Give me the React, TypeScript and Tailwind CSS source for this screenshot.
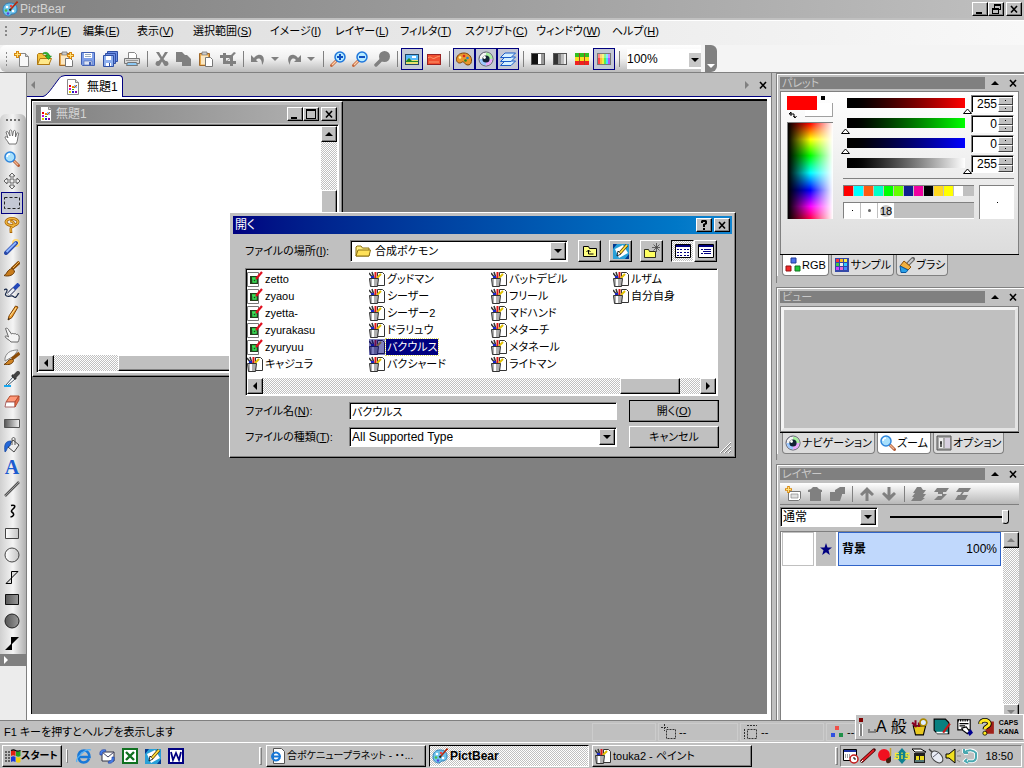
import React, { useState } from 'react';
import clsx from 'clsx';

const RAISED = 'bg-[#c0c0c0] border border-t-white border-l-white border-b-black border-r-black shadow-[inset_-1px_-1px_0_#808080]';
const SUNKEN = 'bg-white border border-t-[#808080] border-l-[#808080] border-b-white border-r-white shadow-[inset_1px_1px_0_#000]';
const DITHER = 'bg-[repeating-conic-gradient(#fff_0_25%,#c0c0c0_0_50%)] bg-[length:2px_2px]';

// 16x16 drawings, shared by the toolbars, tabs and file list
const ART: Record<string, React.ReactNode> = {
  bear: (
    <>
      <path d="M8 2C3 2 1 5 1 9c0 3 2 6 6 6 2 0 1-2 3-2 3 0 5-1 5-5 0-4-3-6-7-6z" fill="#6ec3ec" stroke="#2d7fb8" />
      <circle cx="5" cy="6" r="1.3" fill="#fff" /><circle cx="9" cy="5" r="1.3" fill="#e44" />
      <circle cx="4" cy="9.5" r="1.3" fill="#47c247" /><circle cx="6" cy="12.5" r="1.2" fill="#54d" />
      <circle cx="11" cy="10" r="1.3" fill="#fff" />
      <path d="M15.5.5 9 8" stroke="#b22c10" strokeWidth="1.6" /><path d="M9 8 7.500 9.500" stroke="#321" strokeWidth="2" />
    </>
  ),
  page: (
    <>
      <path d="M2.500.500h8l3 3v12h-11z" fill="#fff" stroke="#888" /><path d="M10.500.500v3h3" fill="#ddd" stroke="#888" />
      <path d="M4 6h2v2H4z" fill="#e00" /><path d="M7 7h2v2H7z" fill="#e80" /><path d="M9 6h3v3H9z" fill="#48f" opacity=".6" /><path d="m9 9 3-3" stroke="#c60" />
      <path d="M4 9h2v2H4z" fill="#c0c" /><path d="M4 12h2v2H4z" fill="#dc0" /><path d="M7 12h2v2H7z" fill="#22c" /><path d="M10 12h2v2h-2z" fill="#80a" /><path d="M7 10h2v1H7z" fill="#2a2" />
    </>
  ),
  newFile: (
    <>
      <path d="M5.500 2.500h6l3 3v10h-9z" fill="#f8f8f8" stroke="#888" /><path d="M11.500 2.500v3h3" fill="#ccc" stroke="#888" />
      <path d="M3.500 0v7M0 3.500h7" stroke="#d88910" strokeWidth="3" /><path d="M3.500 1v5M1 3.500h5" stroke="#ffe27a" strokeWidth="1" />
    </>
  ),
  openFile: (
    <>
      <path d="M1.500 13.500v-10l1-1h4l1 2h6v9z" fill="#f3c23a" stroke="#b07810" />
      <path d="M1.500 13.500 4 7.500h11.500l-2.500 6z" fill="#ffe98a" stroke="#b07810" />
      <path d="M7 2c3-1.500 6-.500 6.500 3h2l-3 3.500-3.500-3.500h2C11 3 9 2.500 7 3z" fill="#30b830" stroke="#107810" strokeWidth=".5" />
    </>
  ),
  paste: (
    <>
      <path d="M1.500 2.500h10v12h-10z" fill="#e8a84a" stroke="#a0682a" /><path d="M4 1h5v3H4z" fill="#ccc" stroke="#777" strokeWidth=".8" />
      <path d="M3 4.500h7v9H3z" fill="#fbe8c4" /><path d="M7.500 6.500h5l2 2v7h-7z" fill="#fff" stroke="#777" />
    </>
  ),
  pasteNew: (
    <>
      <path d="M1.500 2.500h10v12h-10z" fill="#e8a84a" stroke="#a0682a" /><path d="M4 1h5v3H4z" fill="#ccc" stroke="#777" strokeWidth=".8" />
      <path d="M3 4.500h7v9H3z" fill="#fbe8c4" /><path d="M7.500 7.500h5l2 2v6h-7z" fill="#fff" stroke="#777" />
      <path d="M12.500 1v7M9 4.500h7" stroke="#d88910" strokeWidth="3" /><path d="M12.500 2v5M10 4.500h5" stroke="#ffe27a" />
    </>
  ),
  save: (
    <>
      <path d="M1.500 1.500h13v13h-12l-1-1z" fill="#7f9fe8" stroke="#3f5fb4" /><path d="M4 2h8v5H4z" fill="#fff" /><path d="M5 3.500h6M5 5.500h6" stroke="#9ab" />
      <path d="M4 10h8v4H4z" fill="#dde4f4" stroke="#5674b8" strokeWidth=".7" /><path d="M9 11h2v3H9z" fill="#3f5fb4" />
    </>
  ),
  saveAll: (
    <>
      <path d="M5.500.500h10v10h-10z" fill="#6f90e6" stroke="#2f4fa4" /><path d="M3.500 2.500h10v10h-10z" fill="#6f90e6" stroke="#2f4fa4" />
      <path d="M1.500 4.500h10v11h-10z" fill="#8fb0ee" stroke="#2f4fa4" /><path d="M4 5h5v4H4z" fill="#fff" /><path d="M4 12h5v3H4z" fill="#fff" /><path d="M7 12h1v3H7z" fill="#2f4fa4" />
    </>
  ),
  print: (
    <>
      <path d="M4.500 7V1.500h6l2 2V7" fill="#fff" stroke="#888" /><path d="M.500 7.500h15v5H.500z" fill="#d8d8d8" stroke="#777" />
      <path d="M2 9.500h12" stroke="#999" /><path d="M3.500 11.500h9l1 3h-11z" fill="#8cc8f4" stroke="#777" />
    </>
  ),
  cut: <path d="M2 1h3l3 5 3-5h3l-4.500 7 2 2a2.500 2.500 0 1 1-2 3L8 10.500 6.500 13a2.500 2.500 0 1 1-2-3l2-2z" fill="#808080" />,
  copy: <path d="M0 1h6l3 3h2l4 4v7H6v-4H0z" fill="#808080" />,
  crop: <path d="M3 2h3v2h5l3-3 2 1-3 3v5h3v3h-3v2h-3v-2H3V7H0V4h3zm3 5v3l4-3zm1 3h3V8z" fill="#808080" fillRule="evenodd" />,
  undo: <path d="M1 4v7h7L6 9c3-3 6-1 6 5 4-6 1-11-4-10-2 .5-3 1.500-4 3z" fill="#808080" />,
  redo: <path d="M15 4v7H8l2-2c-3-3-6-1-6 5-4-6-1-11 4-10 2 .5 3 1.500 4 3z" fill="#808080" />,
  magnify: (
    <>
      <path d="m10 10 4.500 4.500" stroke="#b4603c" strokeWidth="3" strokeLinecap="round" /><path d="m10 10 4 4" stroke="#f4b48c" strokeWidth="1.200" />
      <circle cx="6" cy="6" r="5" fill="#a8e0fc" stroke="#2f86dc" strokeWidth="1.500" /><path d="M3 6c0-2 1-3 3-3" stroke="#fff" strokeWidth="1.500" fill="none" />
    </>
  ),
  zoomIn: (
    <>
      <path d="m6 10-4.500 4.500" stroke="#c46a40" strokeWidth="3" strokeLinecap="round" /><path d="m6 10-4 4" stroke="#ffd0a8" strokeWidth="1.200" />
      <circle cx="10" cy="6" r="5" fill="#b8ecff" stroke="#1f76dc" strokeWidth="1.500" /><path d="M10 3v6M7 6h6" stroke="#1050c0" strokeWidth="2" />
    </>
  ),
  zoomOut: (
    <>
      <path d="m6 10-4.500 4.500" stroke="#c46a40" strokeWidth="3" strokeLinecap="round" /><path d="m6 10-4 4" stroke="#ffd0a8" strokeWidth="1.200" />
      <circle cx="10" cy="6" r="5" fill="#b8ecff" stroke="#1f76dc" strokeWidth="1.500" /><path d="M7 6h6" stroke="#1050c0" strokeWidth="2" />
    </>
  ),
  zoomGray: <><path d="m7 9-5 5" stroke="#808080" strokeWidth="3.500" strokeLinecap="round" /><circle cx="10.500" cy="5.500" r="5.500" fill="#808080" /></>,
  photo: (
    <>
      <path d="M1 3h14v11H1z" fill="#246" /><path d="M2 4h12v5H2z" fill="#58b8f8" /><path d="M2 9h12v4H2z" fill="#e8e070" />
      <path d="M2 10l3-3 3 3h6v1H2z" fill="#208828" /><path d="M8 5h4v2H8z" fill="#fff" />
    </>
  ),
  photoRed: (
    <>
      <path d="M1 3h14v11H1z" fill="#922" /><path d="M2 4h12v9H2z" fill="#f05030" /><path d="M2 7c3-3 4 2 7 0s4-1 5-2M3 11h10" stroke="#fa9a70" fill="none" />
    </>
  ),
  palette: (
    <>
      <path d="M8 2C3 2 .500 5 .500 8.500S4 13 6 11c2-1 3 3 6 3s3.500-3 3.500-5C15.500 5 12 2 8 2z" fill="#e8962c" stroke="#7c4408" />
      <circle cx="4" cy="6.500" r="1.300" fill="#fff2a0" /><circle cx="8" cy="5" r="1.300" fill="#d22" /><circle cx="11.500" cy="7" r="1.300" fill="#28c" /><circle cx="9.500" cy="9.500" r="1.300" fill="#282" />
    </>
  ),
  eye: (
    <>
      <circle cx="8" cy="8" r="7" fill="#f4f4f4" stroke="#556" /><path d="M8 1.500A6.500 6.500 0 0 1 14.500 8H8z" fill="#a8f0a0" /><path d="M14.500 8A6.500 6.500 0 0 1 8 14.500V8z" fill="#e8a8f8" />
      <path d="M8 14.500A6.500 6.500 0 0 1 1.500 8H8z" fill="#9cc8ff" /><circle cx="8" cy="8" r="3.600" fill="#123" /><circle cx="6.500" cy="6.500" r="1.400" fill="#fff" />
    </>
  ),
  layers: (
    <>
      {[10, 6, 2].map((y) => <path key={y} d={`M5 ${y}h10.500l-4.500 4.500H.500z`} fill="#d4f0ff" stroke="#1a5cc8" />)}
    </>
  ),
  halfTone: <><path d="M1 2h14v12H1z" fill="#555" /><path d="M2 3h6v10H2z" fill="#111" /><path d="M8 3h3v10H8z" fill="#fff" /><path d="M11 3h3v10h-3z" fill="#999" /></>,
  grayTone: <><path d="M1 2h14v12H1z" fill="#555" /><path d="M2 3h4v10H2z" fill="#333" /><path d="M6 3h3v10H6z" fill="#888" /><path d="M9 3h3v10H9z" fill="#bbb" /><path d="M12 3h2v10h-2z" fill="#eee" /></>,
  grid16: (
    <>
      <path d="M1 2h14v12H1z" fill="#a42" />
      {[1, 6, 11].map((x) => <g key={x}><path d={`M${x} 2h4v4h-4z`} fill="#30c020" /><path d={`M${x} 6h4v4h-4z`} fill="#f8e020" /><path d={`M${x} 10h4v4h-4z`} fill="#f02020" /></g>)}
    </>
  ),
  rainbow: (
    <>
      <path d="M1 2h14v12H1z" fill="#777" />
      {['#f44', '#fb3', '#ee4', '#5e5', '#4df', '#a5f'].map((c, i) => <path key={c} d={`M${2 + i * 2} 3h2v10h-2z`} fill={c} />)}
      <path d="M2 3h12v4H2z" fill="#fff" opacity=".35" />
    </>
  ),
  hand: <path d="M5 15c-1-3-4-5-4-7 1-1 2 0 3 1L2 3c1-1 2-.500 2.500 1L6 7 5.500 1.500C6.500.500 7.500 1 7.700 2L8.500 7l1-5c1-1 2-.500 2 .500L11.500 8l1.500-4c1-.700 2 0 1.500 1-1 3-.500 7-2.500 10z" fill="#fff" stroke="#666" strokeWidth=".9" />,
  move: <path d="M8 0l3 3H9v4h4V5l3 3-3 3V9H9v4h2l-3 3-3-3h2V9H3v2L0 8l3-3v2h4V3H5z" fill="#eee" stroke="#555" strokeWidth=".9" />,
  marquee: <path d="M.500 2.500h15v11h-15z" fill="none" stroke="#222" strokeDasharray="3 2" />,
  lasso: <><ellipse cx="8" cy="5" rx="6" ry="3.500" fill="none" stroke="#a86408" strokeWidth="3" /><path d="M6 4c4 0 6 5 2 6-2 .500-1 3-1 6" fill="none" stroke="#a86408" strokeWidth="2.600" /><ellipse cx="8" cy="5" rx="6" ry="3.500" fill="none" stroke="#f0b840" strokeWidth="1.500" /><path d="M6 4c4 0 6 5 2 6-2 .500-1 3-1 5" fill="none" stroke="#f0b840" strokeWidth="1.200" /></>,
  wand: <><circle cx="12" cy="4" r="4" fill="#ffd870" /><circle cx="12" cy="4" r="2.500" fill="#fff4c0" /><path d="M2 14 12 4" stroke="#2848a8" strokeWidth="4" strokeLinecap="round" /><path d="M2.500 13 12 3.500" stroke="#8cb4ff" strokeWidth="2" /></>,
  brush: <><path d="M15.500 1 8 8" stroke="#8c4c08" strokeWidth="3.500" /><path d="M0 14.500c3-1 3-6 8-7l2.500 2.500c0 4-6 6-10.500 4.500z" fill="#c87c1c" stroke="#6c3c08" /><path d="m15 1-6 6" stroke="#f4b850" /></>,
  pen: <><path d="M15 1 6 10" stroke="#2448b8" strokeWidth="4" /><path d="m10 6-5.500 5.500" stroke="#445" strokeWidth="4" /><path d="m10 6-5.500 5.500" stroke="#e8eef8" strokeWidth="2.500" /><path d="M0 7c3-2 4 0 2 3s2 4 5 3 3 3 5 1 2-4 3-3" fill="none" stroke="#124" strokeWidth="1.200" /></>,
  pencil: <><path d="M11.500 1 5 11l-1 4 4-2.500L14 2z" fill="#f0a030" stroke="#7c4408" /><path d="m4 15 .5-2 1.500 1z" fill="#222" /><path d="m12 3-6 8" stroke="#ffe0a0" /></>,
  finger: <path d="M1.500 1.500c1.500-1 3 .5 3.500 2L7.500 7c1-1 2-.500 2.500 0 1-.700 2-.300 2.500.500 1-.500 2 .200 2.500 1.500.500 2 0 4-1 6H7c-1-2-5-3-6-5.500 1-1 2-.500 3.500.500z" fill="#f4f4f4" stroke="#666" />,
  smudge: <><path d="M1 9C3 2 9 1 14 1l-4 6-9 5z" fill="#f4f4f4" stroke="#888" /><path d="M15.500 4 8 10" stroke="#8c4c08" strokeWidth="3.500" /><path d="M0 15.500c3-1 4-5.500 8-5.500l1.500 1.500c0 3-5 5-9.500 4z" fill="#d08424" stroke="#6c3c08" /></>,
  dropper: <><path d="m2 14 7-8 2 2-8 7z" fill="#fff" stroke="#456" /><path d="m8 4 4 4" stroke="#333" strokeWidth="2.500" /><path d="m11 5 3-3" stroke="#444" strokeWidth="4" strokeLinecap="round" /><path d="M0 15h7" stroke="#18a8f0" strokeWidth="2" /></>,
  eraser: <><path d="M6 3h9l-4 6H2z" fill="#ff9878" stroke="#b04828" /><path d="M2 9h9v5H1z" fill="#fff" stroke="#a66" /><path d="m11 9 4-6v4l-4 7z" fill="#e86c4c" stroke="#b04828" strokeWidth=".8" /></>,
  gradient: <><path d="M.500 4.500h15v8H.500z" fill="url(#gr)" stroke="#555" /></>,
  bucket: <><path d="m9 3 6 5-5 7-6-5z" fill="#eee" stroke="#444" /><path d="M8 8V2c0-2 3-2 3 0v6" fill="none" stroke="#555" /><path d="M7 4C1 4 0 8 1 15c2-1 2-6 5-6z" fill="#2468d8" stroke="#0a3c98" strokeWidth=".7" /></>,
  line: <><path d="m1 15 14-14" stroke="#555" strokeWidth="2.500" /><path d="m1 15 14-14" stroke="#999" /></>,
  curve: <path d="M7 2.500c4-1 5 1 2 3.500s-1 3 0 4 1 3.500-2.500 4" fill="none" stroke="#000" strokeWidth="1.600" />,
  rect: <path d="M1.500 3.500h13v10h-13z" fill="url(#lt)" stroke="#444" />,
  circle: <circle cx="8" cy="8" r="7" fill="url(#lt)" stroke="#444" />,
  poly: <path d="M7.500 2.500h6.500L2 14.500h5.500z" fill="#ddd" stroke="#000" />,
  rectFill: <path d="M1.500 3.500h13v10h-13z" fill="url(#dk)" stroke="#111" />,
  circleFill: <circle cx="8" cy="8" r="7" fill="url(#dk)" stroke="#222" />,
  polyFill: <path d="M7 2h8L8 9v6H1l6-6z" fill="#000" />,
  folder: <><path d="M1 13V4l1-1h4l1.500 2H14v8z" fill="#ffef84" stroke="#8c7010" /><path d="M1 13 3 7h12.500L14 13z" fill="#ffe158" stroke="#8c7010" /></>,
  folderUp: <><path d="M1.500 13.500v-10h5l1 2h7v8z" fill="#ffff80" stroke="#000" /><path d="M6.500 7v4h5M4.500 9l2-2 2 2" stroke="#000" fill="none" /></>,
  desktop: <><path d="M0 1h16v15H0z" fill="#28a0d8" /><path d="M0 1h4L0 6zM12 16h4v-5z" fill="#003890" /><path d="M2 6l8-4 5 8-9 5z" fill="#fff" /><path d="m4 13 1-5 3 3z" fill="#fff" stroke="#000" strokeWidth=".8" /><path d="m7 10 7-8" stroke="#604000" strokeWidth="3.400" /><path d="m7 10 7-8" stroke="#ffe040" strokeWidth="1.800" /></>,
  folderNew: <><path d="M.500 14.500v-8h4l1 2h6v6z" fill="#ffff60" stroke="#000" strokeWidth=".8" /><path d="M12.500 0v9M8 4.500h8M9.500 1.500l6 6M15.500 1.500l-6 6" stroke="#444" strokeWidth=".8" /></>,
  listView: <><path d="M.500 1.500h15v13H.500z" fill="#fff" stroke="#000" /><path d="M1 2h14v2H1z" fill="#000080" /><path d="M2 6.500h2m1 0h2m2 0h2m1 0h2M2 9.500h2m1 0h2m2 0h2m1 0h2M2 12.500h2m1 0h2m2 0h2m1 0h2" stroke="#000080" /></>,
  detailView: <><path d="M.500 1.500h15v13H.500z" fill="#fff" stroke="#000" /><path d="M1 2h14v2H1z" fill="#000080" /><path d="M3 6.500h2m1 0h7M5 8.500h8M3 10.500h2m1 0h7" stroke="#000080" /></>,
  gif: <><path d="M.500 1.500h11v14H.500z" fill="#fff" stroke="#777" /><path d="M3 5h8v8H3z" fill="#24401c" /><path d="M5 7h4v1H6v3h3V9" stroke="#38e858" fill="none" strokeWidth="1.400" /><path d="M9 8 15 1" stroke="#e01020" strokeWidth="2.200" /></>,
  bmp: (
    <>
      <path d="M8.500 1.500h5l2 2v11h-7z" fill="#fff" stroke="#333" /><path d="m0 2 4 5M3 1l2 6" stroke="#333" strokeWidth="1.500" /><path d="M6.500 1v6" stroke="#e01818" strokeWidth="2" />
      <path d="m12 3-4 4" stroke="#e0c000" strokeWidth="2" /><path d="M2 5h3v3H2z" fill="#1828c8" /><path d="M.500 7.500h9l-1 8h-7z" fill="#b0b0b0" stroke="#333" /><path d="M3 8h2v7H3z" fill="#fff" />
    </>
  ),
  rgb: <><path d="M6 1h5v5H6z" fill="#4870e8" stroke="#223a98" /><path d="M1 9h5v5H1z" fill="#f02828" stroke="#901010" /><path d="M10 9h5v5h-5z" fill="#20c838" stroke="#107020" /></>,
  samples: (
    <>
      <path d="M1 1h14v14H1z" fill="#3448a8" />
      {['#f33', '#fb2', '#fe4', '#4c4', '#eee', '#3cf', '#c4f', '#e6c', '#48f'].map((c, i) => <path key={c} d={`M${2 + (i % 3) * 4} ${2 + Math.floor(i / 3) * 4}h3v3h-3z`} fill={c} />)}
    </>
  ),
  paintBrush: <><path d="M14 2 9 7" stroke="#666" strokeWidth="4" strokeLinecap="round" /><path d="M14 2 9 7" stroke="#ccc" strokeWidth="2" /><path d="M5 4l7 6-3 3-8-4z" fill="#f0b040" stroke="#8c5008" /><path d="m1 9 8 4-2 2.500H2z" fill="#28a0e8" stroke="#0858a0" /></>,
  option: <><path d="M1 1h14v14H1z" fill="#aaa" stroke="#555" /><path d="M3 3h4v10H3z" fill="#eee" /><path d="M5 6v6M4 8h2" stroke="#333" strokeWidth="1.500" /><path d="M9 3h5v10H9z" fill="#d8d0e0" /></>,
  newLayer: <><path d="M3.500 5.500h12v7l-2 2h-10z" fill="#fff" stroke="#777" /><path d="M6 8h7v4H6z" fill="#e0e0e0" stroke="#888" strokeWidth=".7" /><path d="M3.500 0v7M0 3.500h7" stroke="#d88910" strokeWidth="2.600" /><path d="M3.500 1v5M1 3.500h5" stroke="#ffe27a" /></>,
  trash: <path d="M1 4l3-1 2-2h4l2 2 3 1v2h-1v9H3V6H1z" fill="#808080" />,
  dupLayer: <path d="M1 6h5V4l5-3h5v7h-3v1l-2 6H1z" fill="#808080" />,
  arrowUp: <path d="M8 1l7 7-2 2-3.500-3v8h-3V7L3 10 1 8z" fill="#808080" />,
  arrowDown: <path d="M8 15l7-7-2-2-3.500 3V1h-3v8L3 6 1 8z" fill="#808080" />,
  merge1: <path d="M6 1h4l2 3h3l-3 4h3l-3 4h2l-4 3H0l3-4H1l3-4H2z" fill="#808080" />,
  merge2: <path d="M4 2h12l-3 4h-3v2h4l-6 6H1l4-4H9V8H5V6H1z" fill="#808080" />,
  merge3: <path d="M4 2h12l-3 4H9L7 9h6l-3 5H0l3-5h2l2-3H1z" fill="#808080" />,
  crossDash: <path d="M3.500 0v7M0 3.500h7M5.500 5.500h9v9h-9z" fill="none" stroke="#333" strokeDasharray="2 1" />,
  sizeDash: <path d="M4.500 5.500h9v9h-9zM4 1.500h10M1.500 5v10" fill="none" stroke="#333" strokeDasharray="2 1" />,
  rgbDots: <><path d="M6 2h4v4H6z" fill="#f05048" /><path d="M2 9h4v4H2z" fill="#3050e0" /><path d="M10 9h4v4h-4z" fill="#209048" /></>,
  windows: <><path d="M6 3c2-1 3-1 4.500 0v5c-2-1-3-1-4.500 0z" fill="#e02010" /><path d="M11 3c2 1 3 .500 4.500 0v5c-1.500 1-3 1-4.500 0z" fill="#20a020" /><path d="M6 9c2-1 3-1 4.500 0v5c-2-1-3-1-4.500 0z" fill="#1838d8" /><path d="M11 9c2 1 3 .500 4.500 0v5c-1.500 1-3 1-4.500 0z" fill="#f0d010" /><path d="M0 4h2m1 0h2M0 7h2m1 0h2M0 10h2m1 0h2M0 13h2m1 0h2M6 2.500c2-1 3-1 4.500 0s3 1 5 0" stroke="#000" fill="none" strokeWidth="1.200" /></>,
  ie: <><path d="M13 10.500c-1 2.500-3 4-5.500 4-3 0-5-2.500-5-6s2-6 5.500-6 5.500 3 5.500 6.500H3" fill="none" stroke="#1878d8" strokeWidth="2.600" /><path d="M1 14C-1 11 9 0 15 2" fill="none" stroke="#50b0f8" strokeWidth="1.200" /></>,
  ieDoc: <><path d="M4.500.500h8l3 3v12h-11z" fill="#fff" stroke="#555" /><path d="M11 9.500c-1 2-2 3-4 3s-4-2-4-4 2-4 4-4 4 2 4 4H3" fill="none" stroke="#1878d8" strokeWidth="2" /></>,
  mail: <><path d="M3 4h12v9H3z" fill="#fff" stroke="#334" /><path d="m3 4 6 5 6-5" fill="none" stroke="#446" /><path d="M1 7c-1-5 3-6 6-5l-1 2C4 3 3 5 3 7zM15 9c1 5-3 7-6 6l1-2c3 0 3-2 3-4z" fill="#4880e8" stroke="#1838a0" strokeWidth=".6" /></>,
  excel: <><path d="M1 1h14v14H1z" fill="#fff" stroke="#107020" strokeWidth="2" /><path d="m4 4 8 8M12 4l-8 8" stroke="#107020" strokeWidth="2.400" /></>,
  word: <><path d="M1 1h14v14H1z" fill="#fff" stroke="#000080" strokeWidth="2" /><path d="m3 4 2 8 3-7 3 7 2-8" fill="none" stroke="#000080" strokeWidth="1.800" /></>,
  tools: <><path d="M2 7h11l-2 8H4z" fill="#e8c820" stroke="#000" /><path d="M4 2v6M7 4v4M1 4l4 4" stroke="#802" strokeWidth="1.800" /><circle cx="11" cy="4" r="3" fill="#def" stroke="#a80" strokeWidth="1.500" /></>,
  book: <><path d="M1 1h10l3 3v10H4l-3-3z" fill="#088080" stroke="#000" /><path d="M3 13h10" stroke="#fff" strokeWidth="1.500" /><path d="m9 13 6-8" stroke="#c01818" strokeWidth="2" /></>,
  imePad: <><path d="M2.500 1.500h11v9h-11z" fill="#fff" stroke="#000" /><path d="M3 1v2m2-2v2m2-2v2m2-2v2m2-2v2M4 5h8M4 7h5" stroke="#000" /><path d="M6 9l4-1 3 4-2 2-4-3z" fill="#fff" stroke="#000" /><path d="m11 13 3-3 2 3-3 3z" fill="#000090" /></>,
  help: <><path d="M9 3h6v11H7z" fill="#a02018" /><path d="M3 5c0-4 8-4 8 0 0 3-4 2-4 5" fill="none" stroke="#000" strokeWidth="4" /><path d="M3 5c0-4 8-4 8 0 0 3-4 2-4 5" fill="none" stroke="#ffe820" strokeWidth="2.600" /><circle cx="7" cy="13.500" r="1.800" fill="#ffe820" stroke="#000" strokeWidth=".7" /></>,
  calendar: <><path d="M.500 1.500h13v11H.500z" fill="#fff" stroke="#000" /><path d="M1 2h12v2H1z" fill="#1830a0" /><path d="M2 7h6M2 9h5" stroke="#444" strokeDasharray="1 1" /><circle cx="11" cy="11" r="4" fill="#fff" stroke="#c01818" strokeWidth="1.500" /><path d="M11 9v2h2" stroke="#000" fill="none" /></>,
  redPen: <><path d="M2 13 14 2" stroke="#400" strokeWidth="3.400" strokeLinecap="round" /><path d="M2 13 14 2" stroke="#e02028" strokeWidth="2" /><path d="m1 14 2-2" stroke="#fff" /></>,
  redBall: <><circle cx="7" cy="7" r="6" fill="#f01020" /><path d="M9 13c0-4 4-2 5-6v6c-1 3-5 3-5 0z" fill="#402010" /><path d="M13.500 0v8" stroke="#c8a030" strokeWidth="1.500" /></>,
  sis: <><path d="M8 0l7 8-7 8-7-8z" fill="#108090" /><path d="M5 5.500H1.500v2.500h3v2.500H0M8 7v4M8 4.500v1.500M15.500 5.500H12v2.500h3v2.500h-4.500" stroke="#f8e838" strokeWidth="1.300" fill="none" /></>,
  recorder: <><path d="M3 5h11v10H3z" fill="#202020" /><path d="M1 1h9l5 3H4z" fill="#fff" stroke="#000" /><path d="M5 8h3v4H5zM9 8h4v4H9z" fill="#e8d820" /><path d="M4 13h9" stroke="#8cc" /></>,
  mouse: <><path d="M1 1l5 5" stroke="#444" strokeWidth="1.500" /><ellipse cx="9" cy="9" rx="7" ry="4.500" transform="rotate(45 9 9)" fill="#e8ecf4" stroke="#444" /><path d="m5 9 5-4" stroke="#667" /></>,
  speaker: <><path d="M1 6h3l6-5v14l-6-5H1z" fill="#f0e020" stroke="#000" /><path d="m12 4 3-2M12 8h4M12 12l3 2" stroke="#888" /></>,
  swirl: <><path d="M2 5c4-4 10-3 12 0v4c0 4-3 5-8 4M2 5V1M2 5h4M5 11l-2 2 3 2" fill="none" stroke="#fff" strokeWidth="3.600" /><path d="M2 5c4-4 10-3 12 0v4c0 4-3 5-8 4M2 5V1M2 5h4M5 11l-2 2 3 2" fill="none" stroke="#48a8b0" strokeWidth="2" /></>,
};

function Icon({ name, className }: { name: string; className?: string }) {
  return <svg viewBox="0 0 16 16" aria-hidden="true" className={clsx('w-4 h-4 shrink-0', className)}>{ART[name]}</svg>;
}

// fills used by several shape tools
function SharedFills() {
  const ramps = [['gr', '#555', '#f4f4f4'], ['lt', '#ffffff', '#c4c4c4'], ['dk', '#555', '#999']];
  return (
    <svg className="absolute w-0 h-0" aria-hidden="true">
      <defs>
        {ramps.map(([id, a, b]) => (
          <linearGradient key={id} id={id}><stop offset="0" stopColor={a} /><stop offset="1" stopColor={b} /></linearGradient>
        ))}
      </defs>
    </svg>
  );
}

const GLYPHS: Record<string, React.ReactNode> = {
  min: <path d="M2 9h6v2H2z" />,
  max: <path d="M1 1h10v10H1zM2 3v7h8V3z" fillRule="evenodd" />,
  restore: <path d="M4 1h7v6H9v4H2V5h2zM5 3v2h4v1h1V3zM3 7v3h5V7z" fillRule="evenodd" />,
  close: <path d="m3 3 6 6.500M9 3 3 9.500" stroke="currentColor" strokeWidth="1.600" />,
  help: <path d="M3 4V2l1-1h4l1 1v3L7 6v2H5V5l2-1V3H5v1zM5 9h2v2H5z" />,
  up: <path d="M2 8h8L6 4z" />,
  down: <path d="M2 4h8L6 8z" />,
  left: <path d="M8 2v8L4 6z" />,
  right: <path d="M4 2v8l4-4z" />,
};

function Glyph({ name, className }: { name: string; className?: string }) {
  return <svg viewBox="0 0 12 12" fill="currentColor" aria-hidden="true" className={clsx('w-3 h-3 shrink-0', className)}>{GLYPHS[name]}</svg>;
}

function BevelButton({ glyph, label, className }: { glyph: string; label: string; className: string }) {
  return (
    <button type="button" aria-label={label} className={clsx('flex items-center justify-center shrink-0', RAISED, className)}>
      <Glyph name={glyph} />
    </button>
  );
}

function Hotkey({ text, k }: { text: string; k: string }) {
  return <>{text}(<span className="underline">{k}</span>)</>;
}

function Combo({ id, value, label, icon, className }: { id: string; value: string; label?: string; icon?: string; className?: string }) {
  return (
    <div className={clsx('relative flex', SUNKEN, className)}>
      {icon && <Icon name={icon} className="absolute left-1 top-0.5" />}
      <select id={id} aria-label={label} className={clsx('appearance-none bg-transparent flex-1 min-w-0 outline-none', icon ? 'pl-6' : 'pl-0.5')}>
        <option>{value}</option>
      </select>
      <span className={clsx('absolute right-px top-px bottom-px w-4 flex items-center justify-center pointer-events-none', RAISED)}>
        <Glyph name="down" />
      </span>
    </div>
  );
}

const MENU = [
  ['ファイル', 'F', 'w-16'], ['編集', 'E', 'w-[54px]'], ['表示', 'V', 'w-[56px]'], ['選択範囲', 'S', 'w-[77px]'], ['イメージ', 'I', 'w-[65px]'],
  ['レイヤー', 'L', 'w-[65px]'], ['フィルタ', 'T', 'w-[65px]'], ['スクリプト', 'C', 'w-[71px]'], ['ウィンドウ', 'W', 'w-[76px]'], ['ヘルプ', 'H', 'w-16'],
];

const TOOLBAR = [
  'newFile', 'openFile', 'pasteNew', 'save', 'saveAll', 'print', '|', 'cut', 'copy', 'paste', 'crop', '|', 'undo', 'v', 'redo', 'v', '|',
  'zoomIn', 'zoomOut', 'zoomGray', '|', '*photo', 'photoRed', '|', '*palette', '*eye', '*layers', '|', 'halfTone', 'grayTone', 'grid16', '*rainbow', '|',
];

const TOOLS = [
  'hand', 'magnify', 'move', '*marquee', 'lasso', 'wand', 'brush', 'pen', 'pencil', 'finger', 'smudge', 'dropper',
  'eraser', 'gradient', 'bucket', 'text', 'line', 'curve', 'rect', 'circle', 'poly', 'rectFill', 'circleFill', 'polyFill',
];

function ToolButton({ name }: { name: string }) {
  const active = name.startsWith('*');
  const key = name.replace('*', '');
  return (
    <button aria-label={key} className={clsx('w-[22px] h-[22px] shrink-0 flex items-center justify-center border', active ? 'border-[#000080] bg-[#c4c8d4]' : 'border-transparent')}>
      {key === 'text'
        ? <span className="font-['Liberation_Serif',serif] font-bold text-xl leading-4 text-[#1c5cd0]">A</span>
        : <Icon name={key} />}
    </button>
  );
}

function TopBars() {
  return (
    <header className="shrink-0">
      <div className="h-[18px] flex items-center gap-0.5 px-0.5 bg-linear-to-r from-[#808080] to-[#c0c0c0]">
        <Icon name="bear" />
        <h1 className="flex-1 text-xs text-[#d4d4d4]">PictBear</h1>
        <BevelButton glyph="min" label="最小化" className="w-4 h-3.5" />
        <BevelButton glyph="restore" label="元のサイズに戻す" className="w-4 h-3.5 -ml-0.5" />
        <BevelButton glyph="close" label="閉じる" className="w-4 h-3.5" />
      </div>

      <nav className="mt-0.5 h-[25px] flex items-center pl-[5px] pb-1 border-t border-white bg-linear-to-r from-[#dcdcdc] to-[#f8f8f8]">
        <span className="w-3.5 h-3 bg-[radial-gradient(circle,#888_1px,transparent_1px)] bg-[length:14px_4px] bg-[position:-6px_0]" />
        {MENU.map(([text, k, w]) => (
          <button key={text} className={clsx('text-left whitespace-nowrap', w)}><Hotkey text={text} k={k} /></button>
        ))}
      </nav>

      <div className="h-7 flex bg-[#f4f4f4] border-b border-[#808080]">
        <div className="flex items-center pl-1 rounded-l-md bg-linear-to-b from-white via-[#f0f0f0] to-[#bcbcbc]">
          <span className="w-[7px] h-4 bg-[radial-gradient(circle,#888_1px,transparent_1px)] bg-[length:7px_4px] bg-[position:-1px_0]" />
          {TOOLBAR.map((t, i) => {
            if (t === '|') return <span key={i} className="w-2 flex justify-center"><span className="w-px h-4 bg-[#808080]" /></span>;
            if (t === 'v') return <button key={i} aria-label="履歴" className="w-3.5 text-[#808080]"><Glyph name="down" className="w-2" /></button>;
            return <ToolButton key={i} name={t} />;
          })}
          <div className="relative ml-1 w-[74px] h-5 bg-white flex text-xs">
            <select aria-label="表示倍率" className="appearance-none flex-1 outline-none"><option>100%</option></select>
            <span className="absolute right-0 top-1 w-3 h-3.5 bg-[#c8c8c8] flex items-center justify-center pointer-events-none"><Glyph name="down" className="w-2" /></span>
          </div>
        </div>
        <button aria-label="ツールバーオプション" className="ml-1 w-3 rounded-r-md bg-[#808080] text-white flex items-end justify-center"><Glyph name="down" className="w-2" /></button>
      </div>
    </header>
  );
}

function ToolBox() {
  return (
    <aside className="w-[27px] shrink-0 flex flex-col pt-[41px] bg-[#ececec] border-r border-[#808080]">
      <div className="flex flex-col pl-px rounded-t-md bg-linear-to-r from-[#d0d0d0] via-[#f4f4f4] to-[#b0b0b0]">
        <span className="h-3 mx-1 w-4 self-start bg-[radial-gradient(circle,#707070_1px,transparent_1px)] bg-[length:4px_12px]" />
        {TOOLS.map((t) => <ToolButton key={t} name={t} />)}
      </div>
      <button aria-label="その他" className="h-3 bg-[#808080] text-white flex items-center"><Glyph name="right" className="h-2" /></button>
    </aside>
  );
}

function DocumentWindow() {
  return (
    <section className={clsx('absolute left-0 top-0 w-[311px] h-[276px] p-[3px] flex flex-col', RAISED)}>
      <div className="h-[18px] flex items-center gap-0.5 px-0.5 bg-linear-to-r from-[#808080] to-[#b4b4b4]">
        <Icon name="page" />
        <h2 className="flex-1 text-xs text-[#d4d4d4]">無題1</h2>
        <BevelButton glyph="min" label="最小化" className="w-4 h-3.5" />
        <BevelButton glyph="max" label="最大化" className="w-4 h-3.5 -ml-0.5" />
        <BevelButton glyph="close" label="閉じる" className="w-4 h-3.5" />
      </div>
      <div className={clsx('mt-px flex-1 min-h-0 grid grid-cols-[1fr_16px] grid-rows-[1fr_16px] p-px', SUNKEN)}>
        <div className="bg-white" />
        <div className={clsx('flex flex-col', DITHER)}>
          <BevelButton glyph="up" label="上へ" className="h-4" />
          <div className={clsx('mt-12 h-24', RAISED)} />
        </div>
        <div className={clsx('flex', DITHER)}>
          <BevelButton glyph="left" label="左へ" className="w-4" />
          <div className={clsx('ml-16 w-40', RAISED)} />
        </div>
        <div className="bg-[#c0c0c0]" />
      </div>
    </section>
  );
}

const FILES = [
  'zetto', 'zyaou', 'zyetta-', 'zyurakasu', 'zyuryuu', 'キャジュラ', 'グッドマン', 'シーザー', 'シーザー2', 'ドラリュウ', 'バクウルス', 'バクシャード',
  'バットデビル', 'フリール', 'マドハンド', 'メターチ', 'メタネール', 'ライトマン', 'ルザム', '自分自身',
];

function OpenDialog() {
  const [selected, setSelected] = useState('バクウルス');

  return (
    <form
      role="dialog"
      aria-label="開く"
      onSubmit={(e) => e.preventDefault()}
      className={clsx('absolute left-[229px] top-[212px] w-[507px] p-[3px]', RAISED)}
    >
      <div className="h-[18px] flex items-center px-0.5 bg-linear-to-r from-[#000080] to-[#1084d0]">
        <h2 className="flex-1 text-xs text-white">開く</h2>
        <BevelButton glyph="help" label="ヘルプ" className="w-4 h-3.5" />
        <BevelButton glyph="close" label="閉じる" className="w-4 h-3.5 ml-0.5" />
      </div>

      <div className="pl-3 pr-3.5 pt-1.5 pb-1.5">
        <div className="flex items-center">
          <label htmlFor="place" className="w-[105px] whitespace-nowrap"><Hotkey text="ファイルの場所" k="I" />:</label>
          <Combo id="place" value="合成ポケモン" icon="folder" className="w-[218px] h-[22px]" />
          <div className="ml-2.5 flex gap-2">
            {['folderUp', 'desktop', 'folderNew'].map((n) => (
              <button key={n} type="button" aria-label={n} className={clsx('w-[23px] h-[22px] flex items-center justify-center', RAISED)}><Icon name={n} /></button>
            ))}
            <div className="flex">
              <button type="button" aria-label="一覧" className={clsx('w-[23px] h-[22px] flex items-center justify-center border border-t-black border-l-black border-b-white border-r-white', DITHER)}><Icon name="listView" /></button>
              <button type="button" aria-label="詳細" className={clsx('w-[23px] h-[22px] flex items-center justify-center', RAISED)}><Icon name="detailView" /></button>
            </div>
          </div>
        </div>

        <div className={clsx('mt-1.5 p-px h-32 flex flex-col', SUNKEN)}>
          <ul className="flex-1 grid grid-flow-col auto-cols-[122px] grid-rows-[repeat(6,17px)]">
            {FILES.map((f, i) => (
              <li key={f} className="flex items-center">
                <button type="button" onClick={() => setSelected(f)} className="flex items-center gap-px">
                  <span className={clsx('relative', f === selected && 'after:absolute after:inset-0 after:bg-[#000080]/50')}><Icon name={i < 5 ? 'gif' : 'bmp'} /></span>
                  <span className={clsx('h-4 leading-4 px-px whitespace-nowrap', f === selected && 'bg-[#000080] text-white outline-1 outline-dotted outline-[#dede60]')}>{f}</span>
                </button>
              </li>
            ))}
          </ul>
          <div className={clsx('h-4 flex', DITHER)}>
            <BevelButton glyph="left" label="左へ" className="w-4" />
            <span className="flex-1" />
            <div className={clsx('w-[60px] mr-5', RAISED)} />
            <BevelButton glyph="right" label="右へ" className="w-4" />
          </div>
        </div>

        <div className="mt-1 grid grid-cols-[104px_268px_88px] gap-y-1 items-center">
          <label htmlFor="fname"><Hotkey text="ファイル名" k="N" />:</label>
          <input id="fname" value={selected} onChange={(e) => setSelected(e.target.value)} className={clsx('h-[18px] px-0.5 outline-none', SUNKEN)} />
          <button className={clsx('ml-3 w-[90px] h-[22px] outline outline-black -outline-offset-1', RAISED)}><Hotkey text="開く" k="O" /></button>
          <label htmlFor="ftype" className="whitespace-nowrap"><Hotkey text="ファイルの種類" k="T" />:</label>
          <Combo id="ftype" value="All Supported Type" className="h-5 text-xs" />
          <button type="button" className={clsx('ml-3 w-[90px] h-[22px]', RAISED)}>キャンセル</button>
        </div>
      </div>
      <svg viewBox="0 0 12 12" className="absolute right-1 bottom-1 w-3 h-3" aria-hidden="true">
        <path d="M1 12 12 1M5 12l7-7M9 12l3-3" stroke="#fff" />
        <path d="M2 12 12 2M6 12l6-6M10 12l2-2" stroke="#808080" />
      </svg>
    </form>
  );
}

function Workspace() {
  return (
    <main className="flex-1 min-w-0 flex flex-col bg-white">
      <div className="h-6 shrink-0 flex items-end bg-[#c0c0c0] border-b border-[#000080]">
        <Glyph name="left" className="text-[#808080] self-center" />
        <div className="flex -mb-px ml-1">
          <svg viewBox="0 0 22 22" className="w-[22px] h-[22px]" aria-hidden="true">
            <path d="M0 21.500C5 21 14 5 18 1.500L22 .500V22H0z" fill="#fff" />
            <path d="M0 21.500C5 21 14 5 18 1.500L22 .500" fill="none" stroke="#000080" />
          </svg>
          <button className="h-[22px] pr-1 flex items-center gap-1.5 text-xs bg-white border-t border-r border-[#000080] rounded-tr-sm"><Icon name="page" />無題1</button>
        </div>
        <span className="flex-1" />
        <Glyph name="right" className="text-[#808080] self-center mr-1" />
        <button aria-label="閉じる" className="self-center mr-0.5"><Glyph name="close" /></button>
      </div>
      <div className="flex-1 mt-0.5 mx-1 mb-1.5 border-t-2 border-l border-black bg-[#808080] relative overflow-hidden">
        <DocumentWindow />
      </div>
    </main>
  );
}

function Panel({ title, tabs, children, className }: { title: string; tabs?: [string, string, boolean][]; children: React.ReactNode; className?: string }) {
  return (
    <section className={clsx('pl-0.5 pr-[5px] pt-px border-t border-l border-white flex flex-col', className)}>
      <div className="flex items-center h-3.5 mb-px">
        <h2 className="flex-1 h-3 leading-3 pl-0.5 bg-[#808080] text-[#c8c8c8] overflow-hidden">{title}</h2>
        <button aria-label="折りたたむ" className="ml-1"><Glyph name="up" className="w-2.5" /></button>
        <button aria-label="閉じる" className="ml-1.5"><Glyph name="close" className="w-2.5" /></button>
      </div>
      {children}
      {tabs && (
        <div className="flex pl-0.5 gap-0.5 border-t border-black">
          {tabs.map(([icon, label, active]) => (
            <button key={label} className={clsx('h-[21px] px-0.5 flex items-center gap-px whitespace-nowrap rounded-b-sm border border-t-0 border-[#808080]', active ? 'bg-white' : 'bg-[#dcdcdc]')}>
              <Icon name={icon} />{label}
            </button>
          ))}
        </div>
      )}
    </section>
  );
}

const CHANNELS = [
  { label: '赤', value: 255, track: 'bg-linear-to-r from-black to-[#ff0000]' },
  { label: '緑', value: 0, track: 'bg-linear-to-r from-black to-[#00ff00]' },
  { label: '青', value: 0, track: 'bg-linear-to-r from-black to-[#0000ff]' },
  { label: '不透明度', value: 255, track: 'bg-linear-to-r from-black to-white' },
];

const SWATCHES = [
  'bg-[#ff0000]', 'bg-[#00ffff]', 'bg-[#ff5a10]', 'bg-[#00ffc8]', 'bg-[#00ff00]', 'bg-[#66ff00]', 'bg-[#102090]',
  'bg-[#f000a0]', 'bg-black', 'bg-[#ffd820]', 'bg-[#ffff00]', 'bg-white', 'bg-[#c0c0c0]',
];

const SPIN = 'flex-1 bg-[#c0c0c0] border border-t-white border-l-white border-b-[#404040] border-r-[#404040] flex items-center justify-center';

function Channel({ label, initial, track }: { label: string; initial: number; track: string }) {
  const [value, setValue] = useState(initial);
  return (
    <div className="h-5 flex items-center justify-between text-xs">
      <div className="relative ml-0.5 w-[122px] h-5 pt-1 px-0.5">
        <input
          type="range" min={0} max={255} value={value} aria-label={label}
          onChange={(e) => setValue(Number(e.target.value))}
          className={clsx('block w-full h-2.5 appearance-none [&::-webkit-slider-thumb]:opacity-0', track)}
        />
        <svg viewBox="0 0 9 6" className="absolute bottom-0 -ml-1 w-[9px] h-1.5 pointer-events-none" style={{ left: `${(value / 255) * 100}%` }} aria-hidden="true">
          <path d="M.500 5.500h8L4.500 1z" fill="#fff" stroke="#000" />
        </svg>
      </div>
      <div className={clsx('w-[43px] h-[18px] flex', SUNKEN)}>
        <input value={value} aria-label={`${label}の値`} onChange={(e) => setValue(Number(e.target.value) || 0)} className="flex-1 min-w-0 text-right pr-px outline-none" />
        <div className="w-[15px] flex flex-col pt-px">
          <button aria-label="増やす" className={SPIN}><span className="w-px h-px bg-black" /></button>
          <button aria-label="減らす" className={SPIN}><span className="w-px h-px bg-black" /></button>
        </div>
      </div>
    </div>
  );
}

function PalettePanel() {
  return (
    <Panel title="パレット" tabs={[['rgb', 'RGB', true], ['samples', 'サンプル', false], ['paintBrush', 'ブラシ', false]]}>
      <div className="h-[163px] flex gap-2.5 pl-1.5 pr-1 pt-0.5 border border-b-0 border-[#808080] bg-linear-to-b from-white to-[#dcdcdc]">
        <div className="w-[46px] shrink-0 pt-0.5">
          <div className="h-[22px] flex relative">
            <span className="ml-auto mt-[7px] w-7 h-3.5 bg-white border-b border-r border-[#a0a0a0]" />
            <span className="absolute left-0 top-0 w-[30px] h-3.5 bg-[#ff0000]" />
            <span className="absolute right-2 top-0 w-1 h-1 bg-black" />
            <svg viewBox="0 0 8 6" className="absolute left-0.5 bottom-0 w-2 h-1.5" aria-hidden="true"><path d="M2 0 0 2h5v3h1M2 0v4M4.500 4l1.500 2 1.500-2" fill="none" stroke="#000" /></svg>
          </div>
          <div className="mt-1 h-[97px] relative border-t border-l border-[#808080] bg-[linear-gradient(to_bottom,#f00,#ff0_17%,#0f0_34%,#0ff_52%,#00f_70%,#f0f_87%,#f04)]">
            <div className="absolute inset-0 bg-[linear-gradient(to_right,#000,transparent_50%,#fff)]" />
          </div>
        </div>
        <div className="flex-1 min-w-0">
          {CHANNELS.map((c) => <Channel key={c.label} label={c.label} initial={c.value} track={c.track} />)}
          <div className="mt-1 h-px bg-[#808080]" />
          <div className="mt-1.5 flex justify-between">
            <div className="w-[131px]">
              <div className="h-[11px] flex border-t border-l border-[#808080] bg-[#c0c0c0]">
                {SWATCHES.map((s) => <button key={s} aria-label="色" className={clsx('w-[9px] mr-px', s)} />)}
              </div>
              <div className="mt-1.5 h-[17px] flex gap-px border-t border-l border-[#808080] border-b border-b-white bg-[#c0c0c0]">
                <button aria-label="1px" className="w-4 bg-white flex items-center justify-center"><span className="w-px h-px bg-black" /></button>
                <button aria-label="3px" className="w-4 bg-white flex items-center justify-center"><span className="w-[3px] h-[3px] rounded-full bg-[#666]" /></button>
                <button className="w-4 bg-white flex items-center justify-center"><span className="rounded-full bg-[#ccc] leading-3">18</span></button>
              </div>
            </div>
            <div className="w-[35px] h-[34px] bg-white border-t border-l border-[#808080] flex items-center justify-center"><span className="w-px h-px bg-black" /></div>
          </div>
        </div>
      </div>
    </Panel>
  );
}

function LayerPanel() {
  return (
    <Panel title="レイヤー" className="flex-1 min-h-0">
      <div className="mt-px h-[22px] shrink-0 flex items-center pl-0.5 bg-linear-to-b from-white to-[#b8b8b8] border-b border-[#808080]">
        {['newLayer', 'trash', 'dupLayer', '|', 'arrowUp', 'arrowDown', '|', 'merge1', 'merge2', 'merge3'].map((n, i) => (
          n === '|' ? <span key={i} className="w-2 flex justify-center"><span className="w-px h-4 bg-[#808080]" /></span> : <ToolButton key={n} name={n} />
        ))}
      </div>
      <div className="mt-0.5 flex items-center text-xs">
        <Combo id="blend" label="合成モード" value="通常" className="w-[98px] h-5 shrink-0" />
        <input
          type="range" defaultValue={100} aria-label="不透明度"
          className="ml-3 mr-2.5 flex-1 min-w-0 h-4 appearance-none bg-transparent [&::-webkit-slider-runnable-track]:h-0.5 [&::-webkit-slider-runnable-track]:bg-black [&::-webkit-slider-thumb]:appearance-none [&::-webkit-slider-thumb]:w-[7px] [&::-webkit-slider-thumb]:h-3.5 [&::-webkit-slider-thumb]:-mt-1.5 [&::-webkit-slider-thumb]:rounded-b-sm [&::-webkit-slider-thumb]:bg-[#d4d4d4] [&::-webkit-slider-thumb]:border [&::-webkit-slider-thumb]:border-l-white [&::-webkit-slider-thumb]:border-t-white [&::-webkit-slider-thumb]:border-r-black [&::-webkit-slider-thumb]:border-b-black"
        />
      </div>
      <div className="mt-1 flex-1 min-h-0 flex bg-white border-l border-t border-[#808080]">
        <div className="flex-1 pl-px">
          <div className="h-[34px] flex gap-0.5 text-xs">
            <span className="w-8 border border-[#c0c0c0] bg-white" />
            <span className="w-5 bg-[#c0c0c0] flex items-center justify-center">
              <svg viewBox="0 0 12 12" className="w-3 h-3" aria-hidden="true"><path d="M6 0l1.500 4.500H12L8.500 7.200 9.800 12 6 9.200 2.200 12l1.300-4.800L0 4.500h4.500z" fill="#000080" /></svg>
            </span>
            <button className="flex-1 mr-0.5 px-[3px] flex items-center justify-between bg-[#c0d8fc] border border-[#3064c8]">
              <strong>背景</strong><span>100%</span>
            </button>
          </div>
        </div>
        <div className={clsx('w-4 flex flex-col justify-between', DITHER)}>
          <button aria-label="上へ" className={clsx('h-4 flex items-center justify-center text-[#808080]', RAISED)}><Glyph name="up" /></button>
          <button aria-label="下へ" className={clsx('h-4 flex items-center justify-center text-[#808080]', RAISED)}><Glyph name="down" /></button>
        </div>
      </div>
    </Panel>
  );
}

function SidePanels() {
  return (
    <aside className="w-[253px] shrink-0 pl-1 flex flex-col gap-1 bg-[#c0c0c0] border-l border-[#808080]">
      <div className="h-[210px] border-l border-t border-[#808080]"><PalettePanel /></div>
      <div className="h-[173px] border-l border-t border-[#808080]">
        <Panel title="ビュー" tabs={[['eye', 'ナビゲーション', false], ['magnify', 'ズーム', true], ['option', 'オプション', false]]}>
          <div className="mt-px h-[126px] bg-[#c0c0c0] border-4 border-t-[#f4f4f4] border-l-[#f4f4f4] border-b-[#e4e4e4] border-r-[#e4e4e4] outline outline-[#808080] -outline-offset-1" />
        </Panel>
      </div>
      <div className="flex-1 min-h-0 flex flex-col border-l border-t border-[#808080]"><LayerPanel /></div>
    </aside>
  );
}

function StatusBar() {
  return (
    <footer className="h-[22px] shrink-0 flex items-center pl-1 gap-0.5 bg-[#c0c0c0] border-t border-[#808080] relative">
      <span className="flex-1">F1 キーを押すとヘルプを表示します</span>
      <span className="w-16 h-[18px] border border-[#cccccc]" />
      <span className="w-20 h-[18px] border border-[#cccccc] flex items-center gap-0.5 pl-0.5"><Icon name="crossDash" />--</span>
      <span className="w-[84px] h-[18px] border border-[#cccccc] flex items-center gap-0.5 pl-0.5"><Icon name="sizeDash" />--</span>
      <span className="w-[198px] h-[18px] border border-[#cccccc] flex items-center gap-0.5 pl-0.5"><Icon name="rgbDots" />--</span>

      {/* IME bar floats over the status bar */}
      <div className="absolute right-0 -top-[7px] w-[169px] h-[26px] flex items-center gap-1 pl-0.5 bg-[#c0c0c0] border border-white border-b-[#808080]">
        <span className="flex flex-col items-center w-1.5 gap-0.5"><span className="w-1 h-1 bg-[#800000]" /><span className="w-1 h-3 border-x border-white bg-[#808080]" /></span>
        <button className="flex items-end text-base leading-4"><span className="w-2 h-1 mb-0.5 border-2 border-t-0 border-[#808080]" />A</button>
        <button className="text-base leading-4">般</button>
        {['tools', 'book', 'imePad', 'help'].map((n) => <button key={n} aria-label={n} className="w-[18px]"><Icon name={n} className="w-[18px] h-[18px]" /></button>)}
        <span className="flex flex-col text-[7px] leading-[9px] font-bold"><span>CAPS</span><span>KANA</span></span>
      </div>
    </footer>
  );
}

function Handle() {
  return <span className="w-[3px] h-[18px] shrink-0 border border-t-white border-l-white border-b-[#808080] border-r-[#808080]" />;
}

function Taskbar() {
  return (
    <div className="h-[26px] shrink-0 flex items-center px-0.5 bg-[#c0c0c0] border-t border-white">
      <button className={clsx('w-[60px] h-[22px] flex items-center pl-0.5 font-bold text-[10px] whitespace-nowrap', RAISED)}><Icon name="windows" />スタート</button>
      <span className="ml-1"><Handle /></span>
      <div className="ml-2 w-[183px] flex gap-[7px]">
        {['ie', 'mail', 'excel', 'desktop', 'word'].map((n) => <button key={n} aria-label={n}><Icon name={n} /></button>)}
      </div>
      <Handle />
      <div className="ml-1 flex-1 min-w-0 flex gap-[3px]">
        <button className={clsx('w-[160px] h-[22px] flex items-center gap-0.5 pl-0.5 text-[10px] whitespace-nowrap', RAISED)}><Icon name="ieDoc" />合ポケニュープラネット - ・・...</button>
        <button className={clsx('w-[160px] h-[22px] flex items-center gap-0.5 px-0.5 text-xs font-bold border border-t-black border-l-black border-b-white border-r-white', DITHER)}><Icon name="bear" />PictBear</button>
        <button className={clsx('w-[160px] h-[22px] flex items-center gap-0.5 px-0.5', RAISED)}><Icon name="bmp" />touka2 - ペイント</button>
      </div>
      <Handle />
      <div className="ml-0.5 w-[182px] h-[22px] pl-0.5 flex items-center gap-px border border-t-[#808080] border-l-[#808080] border-b-white border-r-white">
        {['calendar', 'redPen', 'redBall', 'sis', 'recorder', 'mouse', 'speaker', 'swirl'].map((n) => <Icon key={n} name={n} />)}
        <time className="flex-1 text-right pr-2">18:50</time>
      </div>
    </div>
  );
}

export default function App() {
  return (
    <div className="relative h-screen min-w-[900px] flex flex-col overflow-hidden bg-[#c0c0c0] text-black text-[11px] leading-4 font-['Liberation_Sans','Noto_Sans_CJK_JP',sans-serif] [font-feature-settings:'palt']">
      <SharedFills />
      <TopBars />
      <div className="flex-1 min-h-0 flex">
        <ToolBox />
        <Workspace />
        <SidePanels />
      </div>
      <StatusBar />
      <Taskbar />
      <OpenDialog />
    </div>
  );
}
